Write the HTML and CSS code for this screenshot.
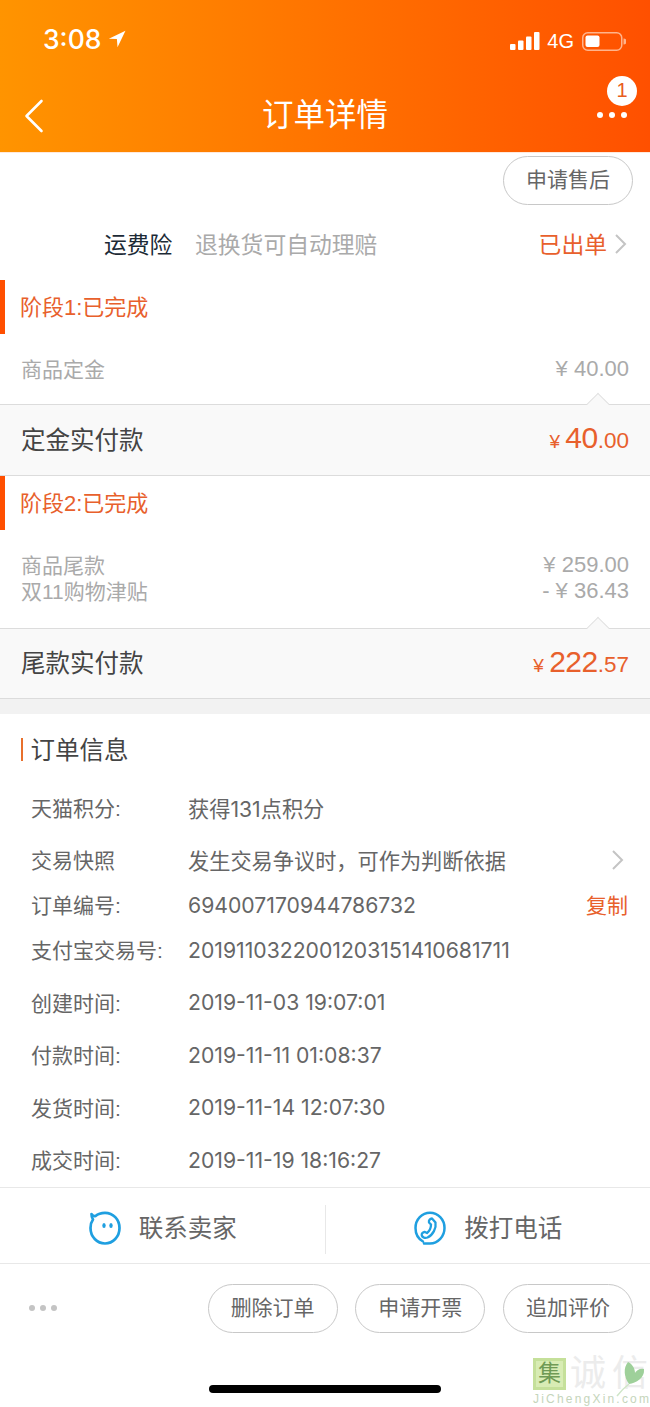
FILE: index.html
```html
<!DOCTYPE html>
<html lang="zh">
<head>
<meta charset="utf-8">
<title>订单详情</title>
<link rel="stylesheet" href="styles.css">
</head>
<body>
<div class="page">
  <header class="header">
    <div class="status">
      <div class="status-time">3:08
        <svg class="loc" width="18" height="18" viewBox="0 0 17 17"><path d="M16.500 .8 L.8 8.200 L8.400 8.600 L9 16.400 Z" fill="#fff"/></svg>
      </div>
      <div class="status-right">
        <svg width="30" height="18" viewBox="0 0 30 18"><rect x="0" y="12" width="5.500" height="6" rx="1" fill="#fff"/><rect x="8" y="8.500" width="5.500" height="9.500" rx="1" fill="#fff"/><rect x="16" y="4.500" width="5.500" height="13.500" rx="1" fill="#fff"/><rect x="24" y="0" width="5.500" height="18" rx="1" fill="#fff"/></svg>
        <span class="net">4G</span>
        <svg class="batt" width="44" height="19" viewBox="0 0 44 19"><rect x=".75" y=".75" width="39" height="17.500" rx="5" fill="none" stroke="#ffb48c" stroke-width="1.500"/><rect x="3.500" y="3.500" width="14" height="11.500" rx="2" fill="#fff"/><path d="M41.500 6.500 a3 3 0 0 1 0 6z" fill="#ffb48c"/></svg>
      </div>
    </div>
    <div class="nav">
      <svg class="back" width="20" height="34" viewBox="0 0 20 34"><path d="M17.500 2 L2.500 17 L17.500 32" fill="none" stroke="#fff" stroke-width="2.600" stroke-linecap="round" stroke-linejoin="round"/></svg>
      <h1 class="nav-title">订单详情</h1>
      <div class="nav-more">
        <span class="badge">1</span>
        <span class="dots"><i></i><i></i><i></i></span>
      </div>
    </div>
  </header>

  <div class="after-sale"><span class="pill">申请售后</span></div>

  <div class="insurance">
    <span class="ins-name">运费险</span>
    <span class="ins-desc">退换货可自动理赔</span>
    <span class="ins-state">已出单</span>
    <svg class="chev" width="13" height="22" viewBox="0 0 13 22"><path d="M2 2 L11 11 L2 20" fill="none" stroke="#c4c4c4" stroke-width="2"/></svg>
  </div>

  <section class="stage">
    <div class="stage-head"><span class="stage-text">阶段1:已完成</span></div>
    <div class="lines one">
      <div class="line"><span>商品定金</span><span class="num">¥ 40.00</span></div>
    </div>
    <div class="paid paid-first">
      <span class="caret"></span>
      <span>定金实付款</span>
      <span class="price"><small>¥ </small><b>40</b><em>.00</em></span>
    </div>
  </section>

  <section class="stage">
    <div class="stage-head"><span class="stage-text">阶段2:已完成</span></div>
    <div class="lines two">
      <div class="line"><span>商品尾款</span><span class="num">¥ 259.00</span></div>
      <div class="line"><span>双11购物津贴</span><span class="num">- ¥ 36.43</span></div>
    </div>
    <div class="paid">
      <span class="caret"></span>
      <span>尾款实付款</span>
      <span class="price"><small>¥ </small><b>222</b><em>.57</em></span>
    </div>
  </section>

  <div class="band"></div>

  <section class="info">
    <h2 class="info-title">订单信息</h2>
    <div class="row"><span class="k">天猫积分:</span><span class="v">获得131点积分</span></div>
    <div class="row gap"><span class="k">交易快照</span><span class="v">发生交易争议时，可作为判断依据</span>
      <svg class="row-chev" width="13" height="22" viewBox="0 0 13 22"><path d="M2 2 L11 11 L2 20" fill="none" stroke="#c4c4c4" stroke-width="2"/></svg></div>
    <div class="row"><span class="k">订单编号:</span><span class="v">694007170944786732</span><span class="copy">复制</span></div>
    <div class="row"><span class="k">支付宝交易号:</span><span class="v">2019110322001203151410681711</span></div>
    <div class="row gap"><span class="k">创建时间:</span><span class="v">2019-11-03 19:07:01</span></div>
    <div class="row gap"><span class="k">付款时间:</span><span class="v">2019-11-11 01:08:37</span></div>
    <div class="row gap"><span class="k">发货时间:</span><span class="v">2019-11-14 12:07:30</span></div>
    <div class="row gap"><span class="k">成交时间:</span><span class="v">2019-11-19 18:16:27</span></div>
  </section>

  <div class="contact">
    <div class="contact-item">
      <svg width="34" height="36" viewBox="0 0 34 36"><path d="M3.500 4 C5 6 6 6.500 7.500 6 C10 3.800 13.500 2.800 17 2.800 C25 2.800 31.500 9.300 31.500 18 C31.500 26.700 25 33.500 17 33.500 C9 33.500 2.500 26.700 2.500 18 C2.500 14.500 3.500 11.500 5 9.500 C4 8 3.500 6 3.500 4 Z" fill="none" stroke="#1f9fe0" stroke-width="2.700" stroke-linejoin="round"/><ellipse cx="16" cy="15.500" rx="1.700" ry="2.500" fill="#1f9fe0"/><ellipse cx="23" cy="15.500" rx="1.700" ry="2.500" fill="#1f9fe0"/></svg>
      <span>联系卖家</span>
    </div>
    <div class="contact-item">
      <svg width="34" height="36" viewBox="0 0 34 36"><path d="M10 31.500 C5.500 29 2.500 24 2.500 18 C2.500 9.500 9 2.800 17 2.800 C25 2.800 31.500 9.500 31.500 18 C31.500 26.500 25 33.500 17 33.500 L11 33.500" fill="none" stroke="#1f9fe0" stroke-width="2.500" stroke-linecap="round"/><path d="M19 8.500 L22.500 12.500 C23.500 18 20 25 14.500 27.500 C12 28.500 9.500 27.500 8.800 25.500 C8.300 23.800 9.500 22.300 11.500 21.800 L14 23 C16.500 21 18 17.500 18 14.500 L16 12.500 C15.500 10.500 17 8.500 19 8.500 Z" fill="none" stroke="#1f9fe0" stroke-width="2.300" stroke-linejoin="round"/></svg>
      <span>拨打电话</span>
    </div>
  </div>

  <div class="actions">
    <span class="more-dots"><i></i><i></i><i></i></span>
    <span class="pill">删除订单</span>
    <span class="pill">申请开票</span>
    <span class="pill">追加评价</span>
  </div>

  <div class="home"><span class="home-bar"></span></div>

  <div class="mark">
    <div class="mark-top">
      <span class="mark-box">集</span><span class="mark-ch">诚</span><span class="mark-ch">信</span>
      <svg class="leaf" width="32" height="38" viewBox="0 0 32 38"><path d="M13 2 C8 8 9 17 14 24 C21 23 30 18 29 9 C25 8 22 10 20 13 C20 8 17 4 13 2 Z" fill="#9ed09a"/><path d="M2 36 C6 31 10 27 14 24" fill="none" stroke="#cfe6c8" stroke-width="1.500"/></svg>
    </div>
    <div class="mark-url">JiChengXin.com</div>
  </div>
</div>
</body>
</html>
```
FILE: styles.css
```css
* { box-sizing: border-box; }
html, body { margin: 0; padding: 0; background: #fff; }
body { font-family: "Liberation Sans", "Noto Sans CJK SC", sans-serif; color: #666; }
.page { position: relative; width: 650px; height: 1407px; overflow: hidden; background: #fff; }

.header { height: 153px; background: linear-gradient(90deg, #ff9400 0%, #ff7a00 40%, #ff5000 100%); color: #fff; border-bottom: 1px solid #ffe9dc; }
.status { height: 78px; display: flex; justify-content: space-between; align-items: flex-start; padding: 23px 25px 0 43px; }
.status-time { display: flex; align-items: center; gap: 7px; font-family: Inter, sans-serif; font-size: 26.500px; line-height: 32px; font-weight: 500; }
.status-right { display: flex; align-items: center; gap: 7px; padding-top: 8px; margin-right: -1px; }
.batt { margin-left: 1px; }
.net { font-size: 20px; line-height: 20px; }
.nav { position: relative; height: 74px; display: flex; align-items: center; justify-content: center; }
.back { position: absolute; left: 24px; top: 21px; }
.nav-title { margin: 0; font-size: 31.500px; line-height: 44px; font-weight: 400; }
.nav-more { position: absolute; left: 597px; top: -2px; width: 40px; height: 44px; }
.badge { position: absolute; left: 10px; top: 0; width: 30px; height: 30px; border-radius: 50%; background: #fff; color: #e85d20; font-size: 20px; line-height: 29px; text-align: center; }
.dots { position: absolute; left: 0; top: 36px; display: flex; gap: 6px; }
.dots i { display: block; width: 6px; height: 6px; border-radius: 50%; background: #fff; }

.pill { display: inline-flex; align-items: center; justify-content: center; width: 130px; height: 49px; padding-bottom: 5px; border: 1px solid #c8c8c8; border-radius: 25px; font-size: 21px; color: #666; background: #fff; }
.after-sale { display: flex; justify-content: flex-end; padding: 3px 17px 0 0; height: 52px; }

.insurance { height: 75px; padding: 1px 23px 0 104px; display: flex; align-items: center; font-size: 22.800px; }
.ins-name { color: #1c2a36; width: 91px; }
.ins-desc { color: #aaa; flex: 1; }
.ins-state { color: #e8602c; margin-right: 7px; }
.chev { margin-top: 1px; }

.stage-head { height: 54px; border-left: 5px solid #ff4f00; padding: 0 0 5px 15px; display: flex; align-items: center; }
.stage-text { font-size: 22px; color: #e8602c; }
.lines { padding: 0 21px; font-size: 21px; color: #aaa; display: flex; flex-direction: column; justify-content: center; }
.lines.one { height: 70px; padding-top: 1px; }
.lines.two { height: 98px; }
.line { display: flex; justify-content: space-between; line-height: 26px; }
.num { font-size: 22px; margin-top: -1px; }
.paid { position: relative; height: 71px; background: #f9f9f9; border-top: 1px solid #dcdcdc; border-bottom: 1px solid #dcdcdc; padding: 0 21px 4px 21px; display: flex; justify-content: space-between; align-items: center; font-size: 24.500px; color: #444; }
.paid-first { height: 72px; }
.caret { position: absolute; left: 590px; top: -9px; width: 16px; height: 16px; background: #f9f9f9; border-left: 1px solid #e2e2e2; border-top: 1px solid #e2e2e2; transform: rotate(45deg); }
.price { color: #e8602c; white-space: nowrap; }
.price small { font-size: 19px; }
.price b { font-weight: 400; font-size: 30px; letter-spacing: -.5px; }
.price em { font-style: normal; font-size: 22.500px; }

.band { height: 15px; background: #f2f2f2; }

.info { height: 473px; }
.info-title { position: relative; margin: 0; height: 70px; padding: 0 0 0 30.500px; font-size: 24.500px; line-height: 74px; font-weight: 400; color: #444; }
.info-title::before { content: ""; position: absolute; left: 21px; top: 24px; width: 2px; height: 23px; background: #e8702c; }
.row { position: relative; height: 45px; display: flex; align-items: center; padding-left: 31px; font-size: 21px; color: #666; }
.gap { margin-top: 7.500px; }
.k { width: 157px; flex: none; white-space: nowrap; }
.v { font-family: Inter, "Noto Sans CJK SC", sans-serif; font-size: 21.200px; margin-top: 1px; white-space: nowrap; }
.copy { position: absolute; right: 22px; color: #e8602c; }
.row-chev { position: absolute; left: 611px; top: 12px; }

.contact { height: 77px; padding-top: 17px; border-top: 1px solid #e8e8e8; border-bottom: 1px solid #e8e8e8; display: flex; align-items: flex-start; }
.contact-item { flex: 1; height: 49px; padding-bottom: 6px; display: flex; align-items: center; justify-content: center; gap: 17px; font-size: 24.500px; color: #666; }
.contact-item svg { margin-top: 3px; }
.contact-item + .contact-item { border-left: 1px solid #e8e8e8; }

.actions { height: 69px; padding: 20px 17px 0 0; display: flex; justify-content: flex-end; gap: 17.700px; position: relative; }
.more-dots { position: absolute; left: 29px; top: 41px; display: flex; gap: 5px; }
.more-dots i { display: block; width: 6px; height: 6px; border-radius: 50%; background: #c4c4c4; }

.home { display: flex; justify-content: center; padding-top: 52px; }
.home-bar { display: block; width: 232px; height: 8px; border-radius: 4px; background: #000; }

.mark { position: absolute; left: 533px; top: 1358px; width: 117px; }
.mark-top { position: relative; display: flex; align-items: center; height: 32px; }
.mark-box { flex: none; width: 33px; height: 32px; background: #d8ecb4; border: 3px solid #c5e09a; color: #6f9a55; font-size: 23px; line-height: 25px; text-align: center; }
.mark-ch { flex: none; width: 40px; margin-left: 2px; font-size: 36px; line-height: 36px; color: #ececec; text-align: center; }
.leaf { position: absolute; left: 82px; top: 2px; }
.mark-url { margin-top: 3px; font-size: 12px; letter-spacing: 2.200px; line-height: 12px; color: #c5d5bb; white-space: nowrap; }
```
